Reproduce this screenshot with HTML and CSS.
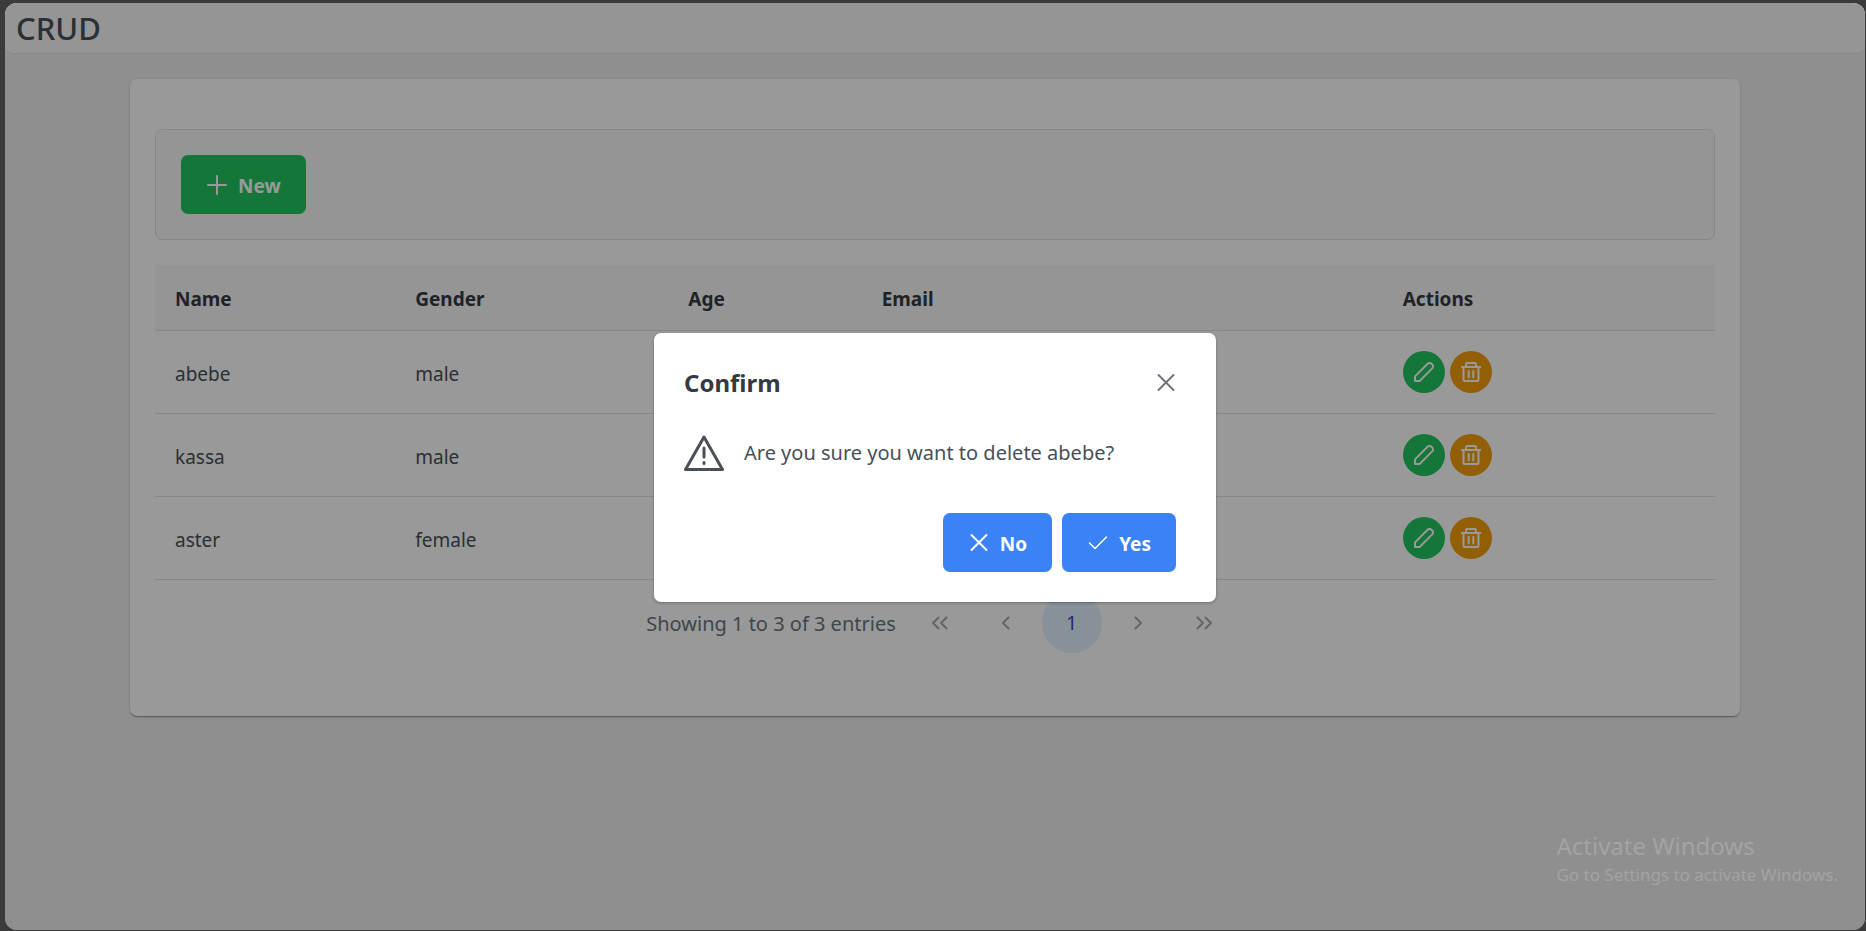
FILE: index.html
```html
<!DOCTYPE html>
<html lang="en">
<head>
<meta charset="utf-8">
<title>CRUD</title>
<link rel="stylesheet" href="styles.css">
</head>
<body>
<svg class="sprite" aria-hidden="true">
  <symbol id="i-plus" viewBox="0 0 20 20"><path d="M10 1v18M1 10h18"/></symbol>
  <symbol id="i-times" viewBox="0 0 20 20"><path d="M2.500 2l15 15M17.500 2l-15 15"/></symbol>
  <symbol id="i-check" viewBox="0 0 20 20"><path d="M1.500 10l5.500 5.500L18.500 4" stroke-width="1.500"/></symbol>
  <symbol id="i-pencil" viewBox="0 0 20 20"><path d="M1 19v-4.600L13.600 1.800a2.700 2.700 0 0 1 3.900 0l.7.7a2.700 2.700 0 0 1 0 3.900L5.600 19z"/></symbol>
  <symbol id="i-trash" viewBox="0 0 20 20"><path d="M.7 5h18.600M2.500 5v12.500a1.600 1.600 0 0 0 1.600 1.600h11.800a1.600 1.600 0 0 0 1.600-1.600V5M5 5V2.500A1.600 1.600 0 0 1 6.600.9h6.800A1.600 1.600 0 0 1 15 2.500V5M7.700 9v6.500M12.300 9v6.500"/></symbol>
  <symbol id="i-left" viewBox="0 0 20 20"><path d="M12.500 4.500L7 10l5.500 5.500"/></symbol>
  <symbol id="i-right" viewBox="0 0 20 20"><path d="M7.500 4.500L13 10l-5.500 5.500"/></symbol>
  <symbol id="i-dleft" viewBox="0 0 20 20"><path d="M8.500 4.500L3 10l5.500 5.500M16.500 4.500L11 10l5.500 5.500"/></symbol>
  <symbol id="i-dright" viewBox="0 0 20 20"><path d="M3.500 4.500L9 10l-5.500 5.500M11.500 4.500L17 10l-5.500 5.500"/></symbol>
  <symbol id="i-warn" viewBox="0 0 40 40"><path d="M20 4L38.500 36.500H1.500z"/><path d="M20 15v9M20 29.500v1"/></symbol>
</svg>
<div class="window">
  <header class="topbar"><h1 class="brand">CRUD</h1></header>
  <main class="card">
    <div class="toolbar">
      <button class="btn btn-new" type="button"><svg class="icon"><use href="#i-plus"/></svg><span class="label">New</span></button>
    </div>
    <table class="grid">
      <colgroup><col class="c-name"><col class="c-gender"><col class="c-age"><col class="c-email"><col class="c-actions"></colgroup>
      <thead><tr><th>Name</th><th>Gender</th><th>Age</th><th>Email</th><th>Actions</th></tr></thead>
      <tbody>
        <tr><td>abebe</td><td>male</td><td></td><td></td><td class="cell-actions"><div class="actions"><button class="round edit" type="button" aria-label="Edit abebe"><svg class="icon"><use href="#i-pencil"/></svg></button><button class="round remove" type="button" aria-label="Delete abebe"><svg class="icon"><use href="#i-trash"/></svg></button></div></td></tr>
        <tr><td>kassa</td><td>male</td><td></td><td></td><td class="cell-actions"><div class="actions"><button class="round edit" type="button" aria-label="Edit kassa"><svg class="icon"><use href="#i-pencil"/></svg></button><button class="round remove" type="button" aria-label="Delete kassa"><svg class="icon"><use href="#i-trash"/></svg></button></div></td></tr>
        <tr><td>aster</td><td>female</td><td></td><td></td><td class="cell-actions"><div class="actions"><button class="round edit" type="button" aria-label="Edit aster"><svg class="icon"><use href="#i-pencil"/></svg></button><button class="round remove" type="button" aria-label="Delete aster"><svg class="icon"><use href="#i-trash"/></svg></button></div></td></tr>
      </tbody>
    </table>
    <nav class="pager" aria-label="Pagination">
      <span class="summary">Showing 1 to 3 of 3 entries</span>
      <button class="page idle" type="button" aria-label="First page"><svg class="icon"><use href="#i-dleft"/></svg></button>
      <button class="page idle" type="button" aria-label="Previous page"><svg class="icon"><use href="#i-left"/></svg></button>
      <button class="page current" type="button">1</button>
      <button class="page idle" type="button" aria-label="Next page"><svg class="icon"><use href="#i-right"/></svg></button>
      <button class="page idle" type="button" aria-label="Last page"><svg class="icon"><use href="#i-dright"/></svg></button>
    </nav>
  </main>
  <div class="mask">
    <section class="dialog" role="dialog" aria-labelledby="dialog-title">
      <div class="dialog-head">
        <h2 class="dialog-title" id="dialog-title">Confirm</h2>
        <button class="close" type="button" aria-label="Close"><svg class="icon"><use href="#i-times"/></svg></button>
      </div>
      <div class="dialog-body"><svg class="warn"><use href="#i-warn"/></svg><p class="message">Are you sure you want to delete abebe?</p></div>
      <div class="dialog-foot">
        <button class="btn" type="button"><svg class="icon"><use href="#i-times"/></svg><span class="label">No</span></button>
        <button class="btn" type="button"><svg class="icon"><use href="#i-check"/></svg><span class="label">Yes</span></button>
      </div>
    </section>
  </div>
  <aside class="watermark"><p class="wm-title">Activate Windows</p><p class="wm-text">Go to Settings to activate Windows.</p></aside>
</div>
</body>
</html>
```
FILE: styles.css
```css
* { box-sizing: border-box; }
html { height: 100%; }
body {
  margin: 0;
  height: 100%;
  padding: 3px 1px 1px 5px;
  background: #3b3b3b;
  color: #495057;
  font: 19px/30px "Noto Sans", "Open Sans", sans-serif;
}
h1, h2, p { margin: 0; }
button { font: inherit; border: 0; padding: 0; cursor: pointer; }
.sprite { position: absolute; width: 0; height: 0; }
.icon, .warn { fill: none; stroke: currentColor; stroke-width: 2; stroke-linecap: round; stroke-linejoin: round; flex: none; }
.icon { width: 20px; height: 20px; }
.window {
  position: relative;
  min-height: 100%;
  border-radius: 12px;
  overflow: hidden;
  background: #eee;
}
.topbar {
  height: 51px;
  padding: 0 11px;
  background: #f8f8fb;
  border-bottom: 1px solid #dee2e6;
  border-radius: 0 0 8px 8px;
}
.brand { font-size: 31px; line-height: 50px; font-weight: 500; }
.card {
  margin: 25px 125px 0;
  padding: 50px 25px 63px;
  background: #fff;
  border-radius: 7px;
  box-shadow: 0 2px 1px -1px rgba(0,0,0,.2), 0 1px 1px rgba(0,0,0,.14), 0 1px 3px rgba(0,0,0,.12);
}
.toolbar {
  padding: 25px;
  margin-bottom: 25px;
  background: #f8f8fb;
  border: 1px solid #dee2e6;
  border-radius: 7px;
}
.btn {
  display: inline-flex;
  align-items: center;
  gap: 11px;
  height: 59px;
  padding: 0 25px 0 26px;
  border-radius: 7px;
  background: #3b82f6;
  color: #fff;
  font-weight: 700;
}
.label { padding-top: 2px; }
.toolbar .btn { display: flex; }
.btn-new { background: #22c55e; }
.grid { width: 100%; table-layout: fixed; border-collapse: separate; border-spacing: 0; }
.c-name { width: 15.4%; }
.c-gender { width: 17.5%; }
.c-age { width: 12.4%; }
.c-email { width: 33.4%; }
.grid th, .grid td { padding: 3px 20px 0; text-align: left; border-bottom: 1px solid #dee2e6; }
.grid th { height: 66px; background: #f8f8fb; color: #343a40; font-weight: 700; }
.grid td { height: 83px; }
.grid .cell-actions { padding-top: 0; }
.actions { display: flex; gap: 5px; }
.round {
  display: flex;
  align-items: center;
  justify-content: center;
  width: 42px;
  height: 42px;
  border-radius: 50%;
  color: #fff;
}
.edit { background: #22c55e; }
.remove { background: #f59e0b; }
.pager { display: flex; align-items: center; justify-content: center; gap: 6px; padding-top: 13px; color: #6c757d; }
.summary { padding: 2px 8px 0 10px; font-size: 20px; }
.page {
  display: flex;
  align-items: center;
  justify-content: center;
  width: 60px;
  height: 60px;
  border-radius: 50%;
  background: transparent;
  color: #6c757d;
}
.page.idle { opacity: .6; }
.page.current { background: #e3f2fd; color: #4338ca; }
.mask {
  position: absolute;
  inset: 0;
  display: flex;
  align-items: center;
  justify-content: center;
  padding-top: 2px;
  background: rgba(0,0,0,.4);
}
.dialog {
  width: 562px;
  max-width: 90%;
  padding: 30px;
  background: #fff;
  border-radius: 7px;
  box-shadow: 0 1px 3px rgba(0,0,0,.3);
}
.dialog-head { display: flex; align-items: center; justify-content: space-between; height: 40px; }
.dialog-title { font-size: 24px; line-height: 40px; font-weight: 700; color: #343a40; }
.close { display: flex; align-items: center; justify-content: center; width: 40px; height: 40px; background: transparent; color: #6c757d; }
.dialog-body { display: flex; align-items: center; gap: 20px; padding: 30px 0 40px; }
.message { font-size: 20px; }
.warn { width: 40px; height: 40px; stroke-width: 3; }
.dialog-foot { display: flex; justify-content: flex-end; gap: 10px; padding-right: 10px; }
.watermark { position: absolute; right: 27px; bottom: 42px; color: #a3a3a3; }
.wm-title { font-size: 24px; line-height: 32px; }
.wm-text { font-size: 17px; line-height: 26px; }
```
